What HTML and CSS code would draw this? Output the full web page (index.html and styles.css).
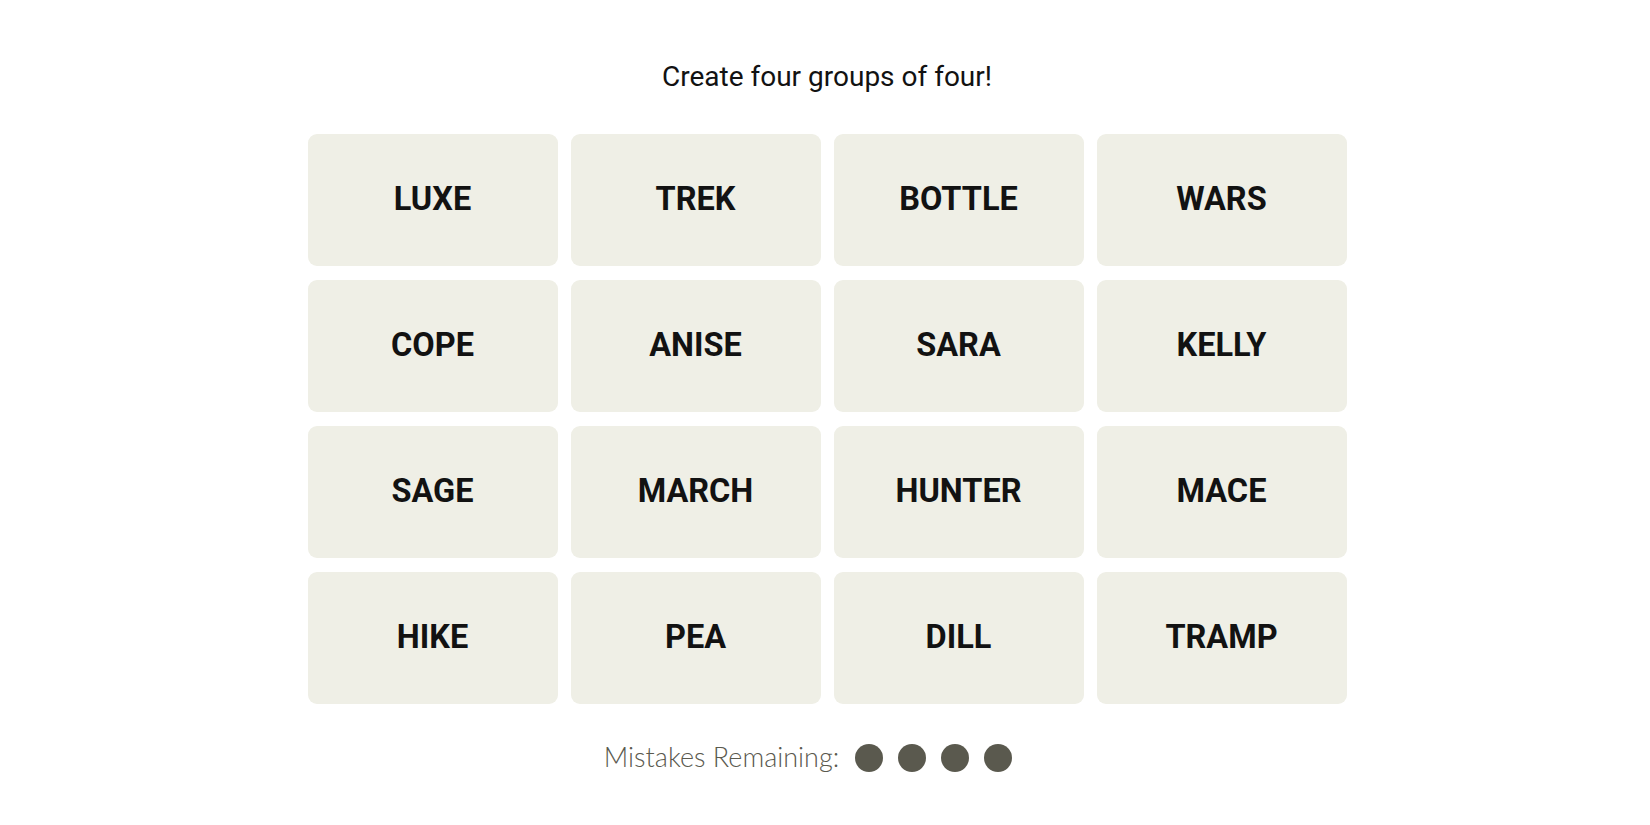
FILE: index.html
```html
<!DOCTYPE html>
<html>
<head>
<meta charset="utf-8">
<link rel="stylesheet" href="styles.css">
</head>
<body>
<main class="game">
  <p class="prompt">Create four groups of four!</p>
  <div class="board">
    <div class="tile">LUXE</div>
    <div class="tile">TREK</div>
    <div class="tile">BOTTLE</div>
    <div class="tile">WARS</div>
    <div class="tile">COPE</div>
    <div class="tile">ANISE</div>
    <div class="tile">SARA</div>
    <div class="tile">KELLY</div>
    <div class="tile">SAGE</div>
    <div class="tile">MARCH</div>
    <div class="tile">HUNTER</div>
    <div class="tile">MACE</div>
    <div class="tile">HIKE</div>
    <div class="tile">PEA</div>
    <div class="tile">DILL</div>
    <div class="tile">TRAMP</div>
  </div>
  <div class="mistakes">
    <span class="mistakes-label">Mistakes Remaining:</span>
    <span class="dots">
      <span class="dot"></span>
      <span class="dot"></span>
      <span class="dot"></span>
      <span class="dot"></span>
    </span>
  </div>
</main>
</body>
</html>
```

FILE: styles.css
```css
html, body {
  margin: 0;
  padding: 0;
  background: #ffffff;
}

.game {
  display: flex;
  flex-direction: column;
  align-items: center;
  padding: 61px 0 40px 4px;
  min-height: 825px;
  box-sizing: border-box;
}

.prompt {
  margin: 0;
  height: 32px;
  line-height: 32px;
  font-family: Roboto, "Liberation Sans", sans-serif;
  font-weight: 400;
  font-size: 28px;
  color: #121212;
}

.board {
  margin-top: 41px;
  display: grid;
  grid-template-columns: repeat(4, 250px);
  grid-auto-rows: 132px;
  gap: 14px 13px;
}

.tile {
  background: #efefe6;
  border-radius: 9px;
  display: flex;
  align-items: center;
  justify-content: center;
  padding-bottom: 3px;
  box-sizing: border-box;
  font-family: Roboto, "Liberation Sans", sans-serif;
  font-weight: 700;
  font-size: 32.5px;
  color: #121212;
}

.mistakes {
  margin-top: 39px;
  display: flex;
  align-items: center;
  height: 30px;
  gap: 16px;
  padding-right: 38px;
  font-family: Lato, "Liberation Sans", sans-serif;
  font-weight: 300;
  font-size: 27px;
  line-height: 30px;
  color: #5a594e;
}

.mistakes-label {
  padding-bottom: 2px;
}

.dots {
  display: flex;
  gap: 15px;
}

.dot {
  width: 28px;
  height: 28px;
  border-radius: 50%;
  background: #5a594e;
}
```
